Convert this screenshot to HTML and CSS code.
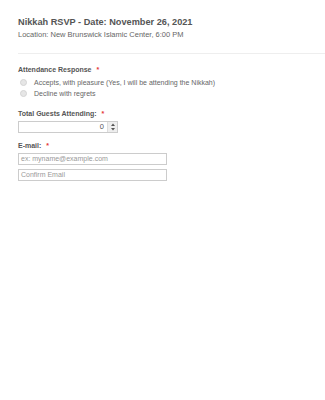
FILE: index.html
```html
<!DOCTYPE html>
<html lang="en">
<head>
  <meta charset="UTF-8" />
  <title>Nikkah RSVP</title>
  <link rel="stylesheet" href="styles.css">
</head>
<body>
  <div class="form">
    <div class="header">
      <h2>Nikkah RSVP - Date: November 26, 2021</h2>
      <div class="sub">Location: New Brunswick Islamic Center, 6:00 PM</div>
    </div>

    <div class="field">
      <label class="label">Attendance Response <span class="req">*</span></label>
      <div class="radio"><span class="dot"></span>Accepts, with pleasure (Yes, I will be attending the Nikkah)</div>
      <div class="radio"><span class="dot"></span>Decline with regrets</div>
    </div>

    <div class="field guests">
      <label class="label">Total Guests Attending: <span class="req">*</span></label>
      <div class="number">
        <span class="num-val">0</span>
        <span class="spin">
          <svg width="6" height="10" viewBox="0 0 6 10"><path d="M1 4 L3 1.5 L5 4 Z M1 6 L3 8.5 L5 6 Z" fill="#555"/></svg>
        </span>
      </div>
    </div>

    <div class="field email">
      <label class="label">E-mail: <span class="req">*</span></label>
      <div class="text-input">ex: myname@example.com</div>
      <div class="text-input">Confirm Email</div>
    </div>
  </div>
</body>
</html>
```

FILE: styles.css
```css
body {
  margin: 0;
  background: #fff;
  font-family: "Liberation Sans", Arial, sans-serif;
  color: #555;
}
.form {
  padding: 16px 0 0 18px;
}
.header {
  border-bottom: 1px solid #eee;
  padding-bottom: 13px;
  margin-bottom: 11px;
}
h2 {
  margin: 0;
  font-size: 9.2px;
  line-height: 12px;
  font-weight: bold;
  color: #555;
}
.sub {
  margin-top: 2px;
  font-size: 7.5px;
  line-height: 10px;
  color: #666;
}
.field {
  margin-top: 8px;
}
.guests { margin-top: 10px; }
.email { margin-top: 8px; }
.label {
  display: block;
  font-size: 7px;
  line-height: 10px;
  font-weight: bold;
  color: #555;
  margin-bottom: 2px;
}
.req { color: #e53935; margin-left: 3px; }
.radio {
  display: flex;
  align-items: center;
  font-size: 7px;
  line-height: 11px;
  color: #666;
}
.dot {
  width: 5px;
  height: 5px;
  border-radius: 50%;
  border: 1px solid #d4d4d4;
  background: #e6e6e6;
  margin: 0 7px 0 2px;
}
.number {
  display: flex;
  width: 100px;
  height: 12px;
  border: 1px solid #ccc;
  box-sizing: border-box;
  font-size: 7.5px;
}
.num-val {
  flex: 1;
  text-align: right;
  padding-right: 3px;
  line-height: 10px;
  color: #555;
}
.spin {
  width: 9px;
  border-left: 1px solid #ddd;
  background: #eee;
  display: flex;
  align-items: center;
  justify-content: center;
}
.text-input {
  width: 149px;
  height: 12px;
  border: 1px solid #ccc;
  box-sizing: border-box;
  font-size: 7px;
  color: #999;
  padding-left: 2px;
  line-height: 10px;
  margin-bottom: 4px;
}
```
